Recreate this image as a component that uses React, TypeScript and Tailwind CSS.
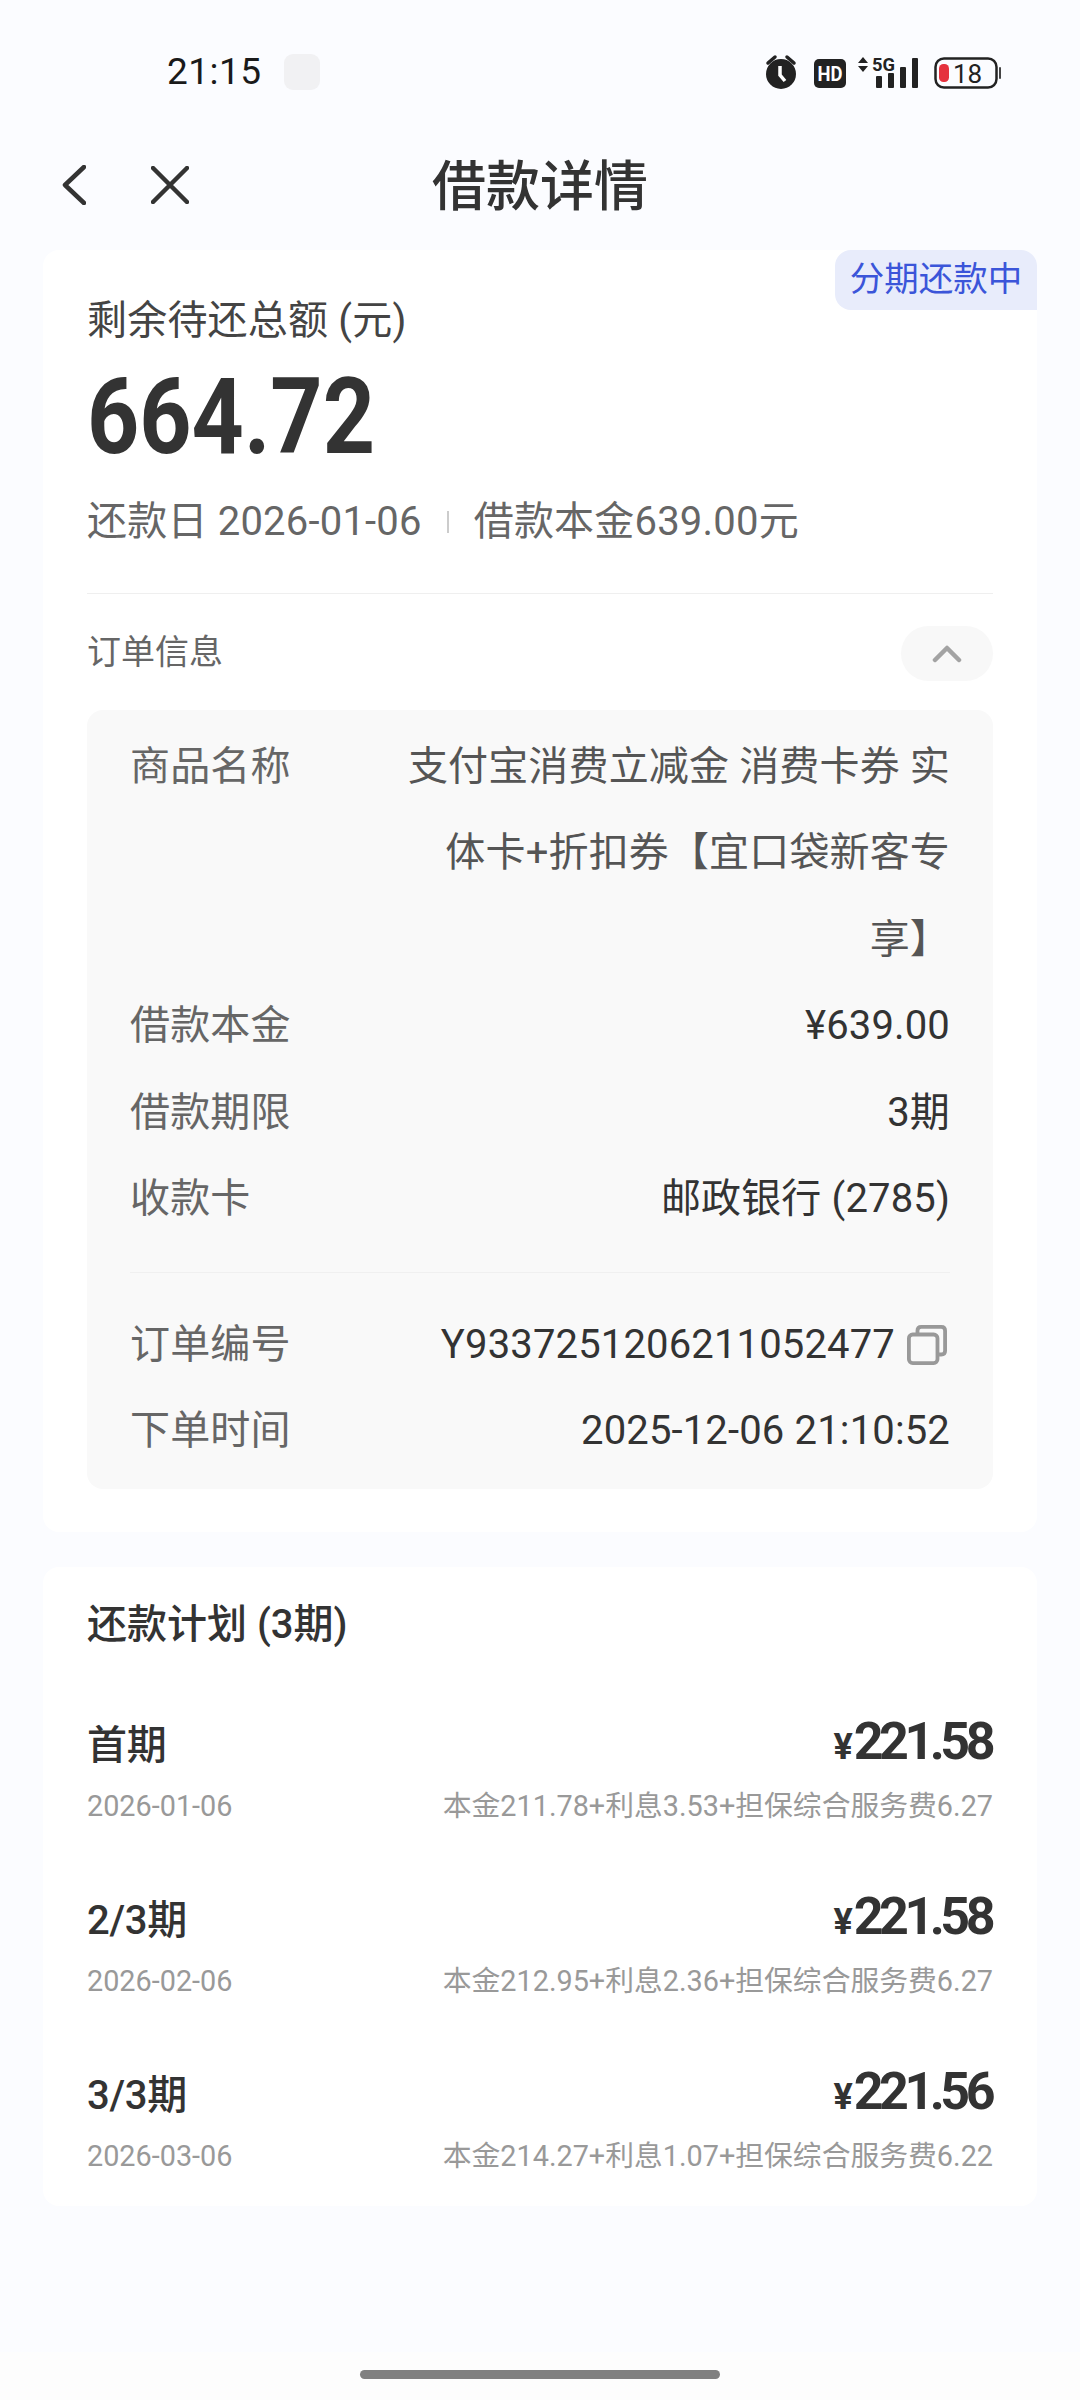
import React from "react"

const font = { fontFamily: "Roboto, 'Noto Sans CJK SC', sans-serif" }

const orderRows = [
  { label: "借款本金", value: "¥639.00" },
  { label: "借款期限", value: "3期" },
  { label: "收款卡", value: "邮政银行 (2785)" },
]

const plans = [
  { name: "首期", date: "2026-01-06", amount: "221.58", detail: "本金211.78+利息3.53+担保综合服务费6.27" },
  { name: "2/3期", date: "2026-02-06", amount: "221.58", detail: "本金212.95+利息2.36+担保综合服务费6.27" },
  { name: "3/3期", date: "2026-03-06", amount: "221.56", detail: "本金214.27+利息1.07+担保综合服务费6.22" },
]

const StatusIcons = () => (
  <svg width="236" height="36" viewBox="0 0 236 36" className="block">
    {/* alarm */}
    <circle cx="16" cy="20" r="15" fill="#222" />
    <path d="M3 9 L10 3 M29 9 L22 3" stroke="#222" strokeWidth="3.5" strokeLinecap="round" />
    <path d="M15 12 V21 L20 27" stroke="#fff" strokeWidth="3.5" fill="none" />
    {/* HD */}
    <rect x="49" y="5" width="32" height="29" rx="5" fill="#222" />
    <text x="65" y="27" textAnchor="middle" fontSize="21" fontWeight="700" fill="#fff" fontFamily="Roboto" textLength="25" lengthAdjust="spacingAndGlyphs">HD</text>
    {/* 5G + signal */}
    <path d="M93 9 L98 3 L103 9 Z M93 12 L103 12 L98 18 Z" fill="#222" />
    <text x="107" y="17" fontSize="19" fontWeight="700" fill="#222" fontFamily="Roboto" textLength="23" lengthAdjust="spacingAndGlyphs">5G</text>
    <rect x="111" y="22" width="6" height="12" rx="1" fill="#222" />
    <rect x="123" y="19" width="6" height="15" rx="1" fill="#222" />
    <rect x="135" y="13" width="6" height="21" rx="1" fill="#222" />
    <rect x="147" y="4" width="6" height="30" rx="1" fill="#222" />
    {/* battery */}
    <rect x="170.5" y="4.5" width="61" height="29" rx="8.5" fill="none" stroke="#222" strokeWidth="2.5" />
    <rect x="174" y="10" width="10" height="18" rx="4.5" fill="#e5323e" />
    <text x="188" y="29" fontSize="26" fill="#222" fontFamily="Roboto">18</text>
    <rect x="234" y="13" width="2" height="12" rx="1" fill="#444" />
  </svg>
)

const App = () => {
  return (
    <div style={font} className="w-[1080px] h-[2400px] flex flex-col bg-[#fbfcff] text-[#333] overflow-hidden">
      {/* status bar */}
      <div className="h-[120px] shrink-0 pt-[54px] pl-[167px] pr-[79px] flex items-start justify-between">
        <div className="flex items-center h-[36px]">
          <span className="text-[37px] leading-[36px] text-[#1a1a1a] w-[95px] tracking-[0.5px]">21:15</span>
          <div className="ml-[22px] w-[36px] h-[36px] rounded-[9px] bg-[#f1f1f3]" />
        </div>
        <StatusIcons />
      </div>

      {/* nav */}
      <div className="h-[130px] shrink-0 grid grid-cols-[1fr_auto_1fr] items-center px-[62px]">
        <div className="flex items-center gap-[65px]">
          <svg width="24" height="40" viewBox="0 0 24 40" fill="none" stroke="#333" strokeWidth="4.5" strokeLinecap="round" strokeLinejoin="round">
            <path d="M22 2 L3 20 L22 38" />
          </svg>
          <svg width="38" height="38" viewBox="0 0 38 38" fill="none" stroke="#333" strokeWidth="4.5" strokeLinecap="round">
            <path d="M2 2 L36 36 M36 2 L2 36" />
          </svg>
        </div>
        <div className="text-[54px] leading-[72px] font-medium text-[#333] mt-[5px]">借款详情</div>
        <div />
      </div>

      {/* summary card */}
      <div className="relative mx-[43px] bg-white rounded-[16px] px-[44px] pt-[41px] pb-[43px]">
        <div className="absolute top-0 right-0 h-[60px] w-[202px] bg-[#e8ecfb] rounded-tr-[16px] rounded-bl-[16px] rounded-tl-[16px] flex items-center justify-center text-[34.5px] text-[#3b55d9]">
          分期还款中
        </div>
        <div className="text-[40px] leading-[60px] text-[#444] tracking-[0.2px]">剩余待还总额 (元)</div>
        <div className="mt-[6px] h-[120px] text-[106px] leading-[120px] font-bold text-[#333] origin-left scale-x-[0.86]">664.72</div>
        <div className="mt-[15px] h-[60px] flex items-center text-[40px] text-[#666] tracking-[0.2px]">
          <span>还款日 2026-01-06</span>
          <span className="mx-[25px] w-[2px] h-[22px] bg-[#ccc]" />
          <span>借款本金639.00元</span>
        </div>
        <div className="mt-[41px] h-[1px] bg-[#efefef]" />
        <div className="mt-[32px] h-[55px] flex items-center justify-between">
          <span className="text-[34px] text-[#666] -mt-[2px]">订单信息</span>
          <div className="w-[92px] h-[55px] rounded-full bg-[#f8f8f8] flex items-center justify-center">
            <svg width="30" height="18" viewBox="0 0 30 18" fill="none" stroke="#a3a3a3" strokeWidth="4.5" strokeLinecap="round" strokeLinejoin="round">
              <path d="M3 15 L15 3 L27 15" />
            </svg>
          </div>
        </div>

        <div className="mt-[29px] bg-[#f9f9f9] rounded-[16px] px-[43px] pt-[13.5px] pb-[14px] text-[40px] leading-[86.5px] tracking-[0.15px]">
          <div className="flex justify-between">
            <span className="text-[#666] shrink-0">商品名称</span>
            <span className="w-[560px] text-right text-[#555]">支付宝消费立减金 消费卡券 实体卡+折扣券【宜口袋新客专享】</span>
          </div>
          {orderRows.map((row) => (
            <div key={row.label} className="flex justify-between">
              <span className="text-[#666]">{row.label}</span>
              <span>{row.value}</span>
            </div>
          ))}
          <div className="mt-[29px] mb-[29px] h-[1px] bg-[#f0f0f0]" />
          <div className="flex justify-between">
            <span className="text-[#666]">订单编号</span>
            <span className="flex items-center gap-[12px]">
              Y9337251206211052477
              <svg width="40" height="40" viewBox="0 0 42 42" fill="none" stroke="#999" strokeWidth="4" strokeLinejoin="round" className="mr-[3px]">
                <rect x="2" y="10" width="30" height="30" rx="4" />
                <path d="M11 10 V6 Q11 2 15 2 H36 Q40 2 40 6 V27 Q40 31 36 31 H32" />
              </svg>
            </span>
          </div>
          <div className="flex justify-between">
            <span className="text-[#666]">下单时间</span>
            <span>2025-12-06 21:10:52</span>
          </div>
        </div>
      </div>

      {/* repayment plan */}
      <div className="mt-[35.5px] mx-[43px] bg-white rounded-[16px] px-[44px] pt-[28px] pb-[27px]">
        <div className="text-[40px] leading-[60px] font-medium text-[#333]">还款计划 (3期)</div>
        <div className="mt-[54px] flex flex-col gap-[55px]">
          {plans.map((p) => (
            <div key={p.name}>
              <div className="h-[70px] flex items-center justify-between">
                <span className="text-[40px] font-medium mt-[4px] -tracking-[0.3px]">{p.name}</span>
                <span className="font-bold text-[#333] flex items-baseline -mt-[4px]">
                  <span className="text-[36px] mr-[1px]">¥</span>
                  <span className="text-[52px] tracking-[-4.5px] mr-[2px]">{p.amount}</span>
                </span>
              </div>
              <div className="h-[50px] pt-[5px] flex items-center justify-between text-[28.8px] text-[#999]">
                <span>{p.date}</span>
                <span>{p.detail}</span>
              </div>
            </div>
          ))}
        </div>
      </div>

      <div className="flex-1" />
      {/* home indicator */}
      <div className="h-[48px] shrink-0 bg-[#fdfdfd] pt-[18px] flex justify-center">
        <div className="w-[360px] h-[9px] rounded-full bg-[#808080]" />
      </div>
    </div>
  )
}

export default App
